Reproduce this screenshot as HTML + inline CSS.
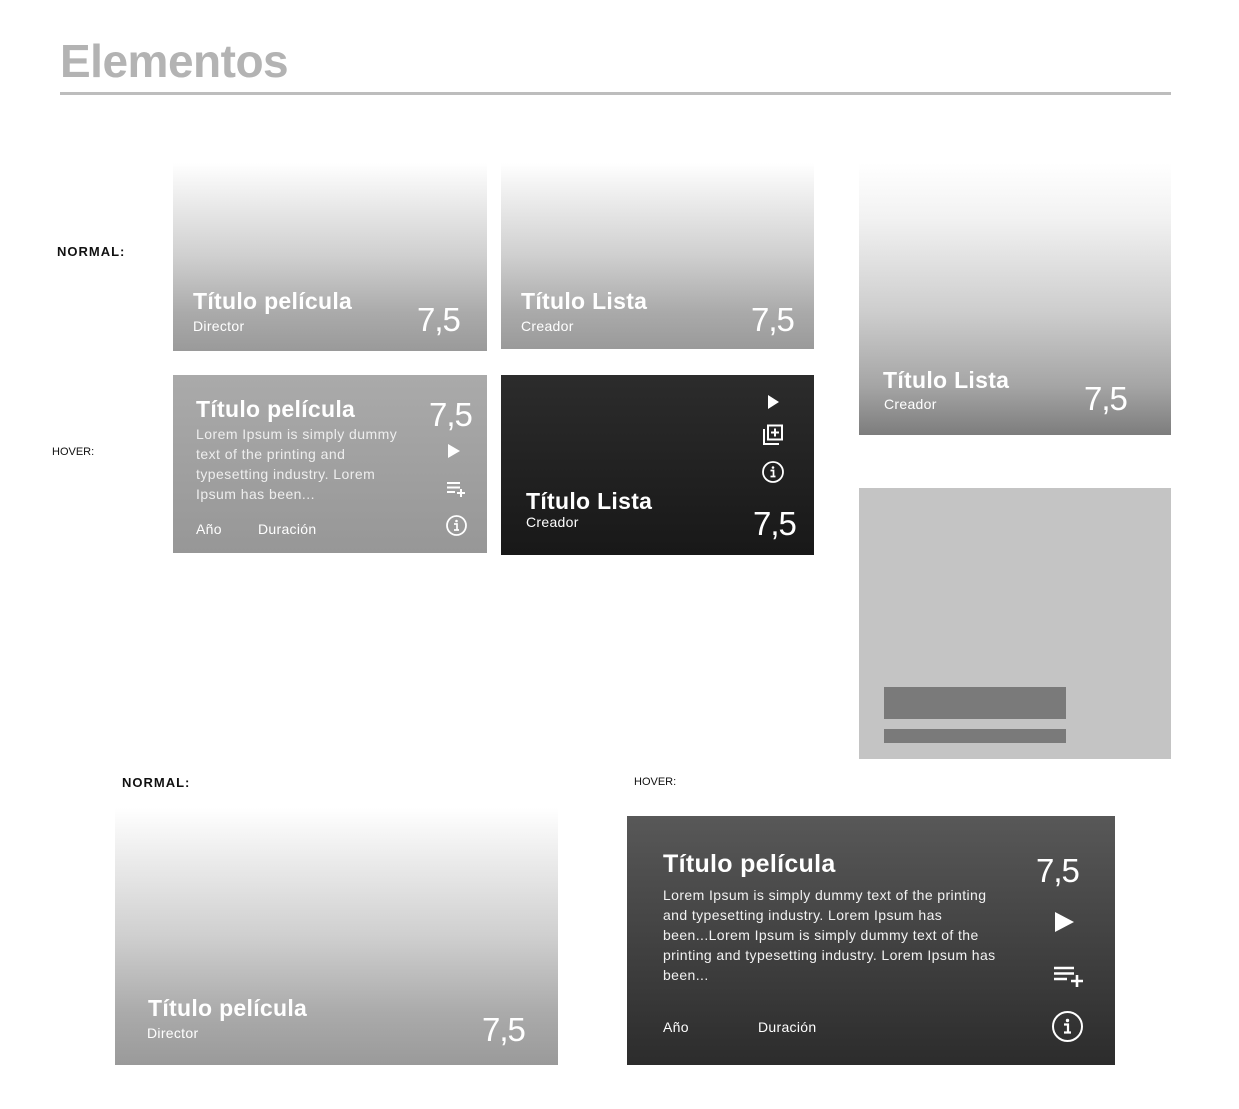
<!DOCTYPE html>
<html><head><meta charset="utf-8"><style>
*{margin:0;padding:0;box-sizing:border-box}
body{width:1239px;height:1109px;background:#fff;position:relative;overflow:hidden;font-family:"Liberation Sans",sans-serif}
.a{position:absolute;white-space:nowrap;line-height:1}
.box{position:absolute}
.norm{background:linear-gradient(to bottom,#fff 0%,#f3f3f3 12%,#cfcfcf 50%,#aaa 80%,#9a9a9a 100%)}
.t{font-weight:bold;font-size:23px;color:#fff}
.s{font-size:14px;color:#fff;letter-spacing:0.3px}
.r{font-size:33px;color:#fff;font-weight:300;letter-spacing:-1px}
.p{position:absolute;font-size:14px;line-height:20px;color:#eee;white-space:nowrap;letter-spacing:0.45px}
svg{position:absolute}
</style></head><body>
<div class="a" style="left:60px;top:38px;font-size:46px;font-weight:bold;color:#b3b3b3;letter-spacing:-0.5px">Elementos</div>
<div class="box" style="left:60px;top:92px;width:1111px;height:3px;background:#bdbdbd"></div>

<div class="a" style="left:57px;top:245px;font-size:13px;font-weight:bold;letter-spacing:1px;color:#111">NORMAL:</div>
<div class="a" style="left:52px;top:447px;font-size:11px;color:#111">HOVER:</div>

<!-- card1 -->
<div class="box norm" style="left:173px;top:163px;width:314px;height:188px"></div>
<div class="a t" style="left:193px;top:290px;letter-spacing:0.3px">Título película</div>
<div class="a s" style="left:193px;top:319px">Director</div>
<div class="a r" style="left:417px;top:303px">7,5</div>

<!-- card2 -->
<div class="box norm" style="left:501px;top:163px;width:313px;height:186px"></div>
<div class="a t" style="left:521px;top:290px;letter-spacing:0.3px">Título Lista</div>
<div class="a s" style="left:521px;top:319px">Creador</div>
<div class="a r" style="left:751px;top:303px">7,5</div>

<!-- card3 -->
<div class="box" style="left:859px;top:163px;width:312px;height:272px;background:linear-gradient(to bottom,#fff 0%,#f2f2f2 20%,#cdcdcd 55%,#a5a5a5 82%,#7d7d7d 100%)"></div>
<div class="a t" style="left:883px;top:369px;letter-spacing:0.3px">Título Lista</div>
<div class="a s" style="left:884px;top:397px">Creador</div>
<div class="a r" style="left:1084px;top:382px">7,5</div>

<!-- placeholder -->
<div class="box" style="left:859px;top:488px;width:312px;height:271px;background:#c4c4c4"></div>
<div class="box" style="left:884px;top:687px;width:182px;height:32px;background:#7a7a7a"></div>
<div class="box" style="left:884px;top:729px;width:182px;height:14px;background:#7a7a7a"></div>

<!-- hover1 -->
<div class="box" style="left:173px;top:375px;width:314px;height:178px;background:linear-gradient(to bottom,#aaa,#979797)"></div>
<div class="a t" style="left:196px;top:398px;letter-spacing:0.3px">Título película</div>
<div class="p" style="left:196px;top:424px">Lorem Ipsum is simply dummy<br>text of the printing and<br>typesetting industry. Lorem<br>Ipsum has been...</div>
<div class="a r" style="left:429px;top:398px">7,5</div>
<svg style="left:446px;top:443px" width="16" height="16" viewBox="0 0 16 16"><path d="M2 1L14 8L2 15Z" fill="#fff"/></svg>
<svg style="left:446px;top:480px" width="22" height="18" viewBox="0 0 22 18"><path d="M1 3h13M1 7.5h13M1 12h8M15 9v8M11 13h8" stroke="#fff" stroke-width="2" fill="none"/></svg>
<svg style="left:445px;top:514px" width="23" height="23" viewBox="0 0 23 23"><circle cx="11.5" cy="11.5" r="9.5" stroke="#fff" stroke-width="1.8" fill="none"/><circle cx="11.5" cy="7" r="1.3" fill="#fff"/><path d="M9 10h3v6M9 16h5" stroke="#fff" stroke-width="1.7" fill="none"/></svg>
<div class="a s" style="left:196px;top:522px">Año</div>
<div class="a s" style="left:258px;top:522px">Duración</div>

<!-- hover2 -->
<div class="box" style="left:501px;top:375px;width:313px;height:180px;background:linear-gradient(to bottom,#2c2c2c,#181818)"></div>
<svg style="left:766px;top:394px" width="16" height="16" viewBox="0 0 16 16"><path d="M2 1L13 8L2 15Z" fill="#fff"/></svg>
<svg style="left:762px;top:424px" width="22" height="22" viewBox="0 0 22 22"><path d="M2 5v15h15" stroke="#fff" stroke-width="2" fill="none"/><rect x="6" y="1.5" width="14" height="14" stroke="#fff" stroke-width="2" fill="none"/><path d="M13 4.5v8M9 8.5h8" stroke="#fff" stroke-width="2"/></svg>
<svg style="left:761px;top:460px" width="24" height="24" viewBox="0 0 24 24"><circle cx="12" cy="12" r="10" stroke="#fff" stroke-width="1.8" fill="none"/><circle cx="12" cy="7.5" r="1.3" fill="#fff"/><path d="M9.5 10.5h3v6M9.5 16.5h5" stroke="#fff" stroke-width="1.7" fill="none"/></svg>
<div class="a t" style="left:526px;top:490px;letter-spacing:0.3px">Título Lista</div>
<div class="a s" style="left:526px;top:515px">Creador</div>
<div class="a r" style="left:753px;top:507px">7,5</div>

<!-- bottom labels -->
<div class="a" style="left:122px;top:776px;font-size:13px;font-weight:bold;letter-spacing:1px;color:#111">NORMAL:</div>
<div class="a" style="left:634px;top:777px;font-size:11px;color:#111">HOVER:</div>

<!-- bottom normal -->
<div class="box norm" style="left:115px;top:808px;width:443px;height:257px"></div>
<div class="a t" style="left:148px;top:997px;letter-spacing:0.3px">Título película</div>
<div class="a s" style="left:147px;top:1026px">Director</div>
<div class="a r" style="left:482px;top:1013px">7,5</div>

<!-- bottom hover -->
<div class="box" style="left:627px;top:816px;width:488px;height:249px;background:linear-gradient(to bottom,#585858,#2c2c2c)"></div>
<div class="a t" style="left:663px;top:852px;font-size:25px;letter-spacing:0.3px">Título película</div>
<div class="p" style="left:663px;top:885px;color:#f2f2f2;letter-spacing:0.4px">Lorem Ipsum is simply dummy text of the printing<br>and typesetting industry. Lorem Ipsum has<br>been...Lorem Ipsum is simply dummy text of the<br>printing and typesetting industry. Lorem Ipsum has<br>been...</div>
<div class="a r" style="left:1036px;top:854px">7,5</div>
<svg style="left:1054px;top:911px" width="22" height="22" viewBox="0 0 22 22"><path d="M1 1L20 11L1 21Z" fill="#fff"/></svg>
<svg style="left:1053px;top:965px" width="33" height="22" viewBox="0 0 33 22"><path d="M1 3h20M1 8.5h20M1 14h13M24 10v12M18 16h12" stroke="#fff" stroke-width="2.6" fill="none"/></svg>
<svg style="left:1051px;top:1010px" width="33" height="33" viewBox="0 0 33 33"><circle cx="16.5" cy="16.5" r="14.5" stroke="#fff" stroke-width="2" fill="none"/><circle cx="16.5" cy="10.5" r="1.7" fill="#fff"/><path d="M13 14.5h4v8M13 22.5h7" stroke="#fff" stroke-width="2.2" fill="none"/></svg>
<div class="a s" style="left:663px;top:1020px">Año</div>
<div class="a s" style="left:758px;top:1020px">Duración</div>
</body></html>
